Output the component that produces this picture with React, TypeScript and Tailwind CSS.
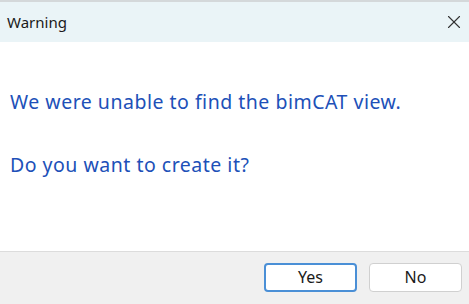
import { X } from 'lucide-react'

const font = { fontFamily: '"Noto Sans", "Open Sans", sans-serif' }

const App = (): JSX.Element => {
  return (
    <div className="w-[469px] h-[304px] flex flex-col bg-white overflow-hidden" style={font}>
      <div className="h-[2px] bg-[#d4d8da]" />
      <div className="h-[40px] bg-[#eaf4f7] flex items-center justify-between pl-[7px] pr-[4px]">
        <span className="text-[15px] text-[#1a1a1a]">Warning</span>
        <X className="w-[22px] h-[22px] text-[#333]" strokeWidth={1.2} />
      </div>
      <div className="flex-1 pl-[10px] pt-[47px] text-[#2050b8] text-[19.5px] tracking-[0.5px]">
        <p className="leading-[26px]">We were unable to find the bimCAT view.</p>
        <p className="leading-[26px] mt-[37px]">Do you want to create it?</p>
      </div>
      <div className="h-[53px] bg-[#f0f0f0] border-t border-[#dcdcdc] flex items-center justify-end gap-[12px] pr-[7px] pb-[2px]">
        <button className="w-[93px] h-[29px] rounded-[4px] border-2 border-[#4a8fd6] bg-white text-[16px] text-[#1a1a1a]">
          Yes
        </button>
        <button className="w-[93px] h-[29px] rounded-[4px] border border-[#d0d0d0] bg-white text-[16px] text-[#1a1a1a]">
          No
        </button>
      </div>
    </div>
  )
}

export default App
